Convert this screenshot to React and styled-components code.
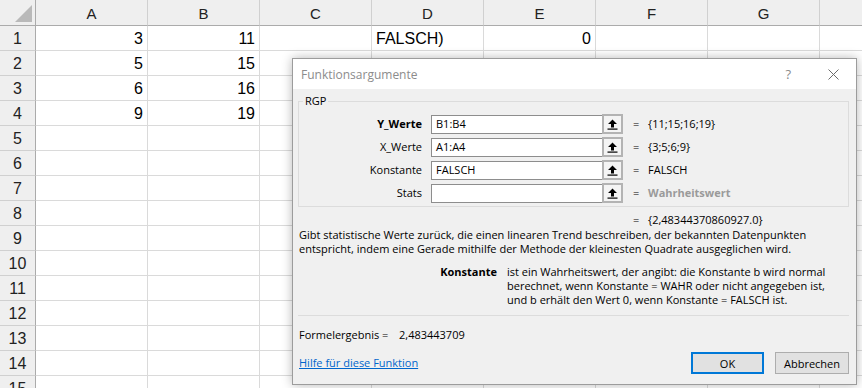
import styled, { createGlobalStyle } from "styled-components";

const GlobalStyle = createGlobalStyle`
  html, body {
    margin: 0;
    padding: 0;
    background: #ffffff;
  }
`;

const columns = ["A", "B", "C", "D", "E", "F", "G", ""];

// values per row, text cells align left and numbers align right (like excel)
const data = [
  ["3", "11", "", "FALSCH)", "0"],
  ["5", "15"],
  ["6", "16"],
  ["9", "19"],
];

const args = [
  { name: "Y_Werte", value: "B1:B4", result: "{11;15;16;19}", required: true },
  { name: "X_Werte", value: "A1:A4", result: "{3;5;6;9}" },
  { name: "Konstante", value: "FALSCH", result: "FALSCH" },
  { name: "Stats", value: "", result: "Wahrheitswert", hint: true },
];

const isNumber = (v) => /^-?\d+([.,]\d+)?$/.test(v);

const ArrowUpIcon = () => (
  <svg width="11" height="11" viewBox="0 0 11 11">
    <path d="M5.5 0.5 L10 5 L7 5 L7 8.5 L4 8.5 L4 5 L1 5 Z" fill="#000" />
    <rect x="0.5" y="9.5" width="10" height="1.2" fill="#000" />
  </svg>
);

const CloseIcon = () => (
  <svg width="11" height="11" viewBox="0 0 11 11">
    <path d="M0.5 0.5 L10.5 10.5 M10.5 0.5 L0.5 10.5" stroke="#6b6b6b" strokeWidth="1" />
  </svg>
);

export default function App() {
  const rows = Array.from({ length: 15 }, (_, i) => data[i] || []);

  return (
    <>
      <GlobalStyle />
      <Screen>
        <Sheet>
          <Corner>
            <CornerMark />
          </Corner>
          {columns.map((c, i) => (
            <ColHeader key={"h" + i}>{c}</ColHeader>
          ))}
          {rows.map((row, r) => (
            <Row key={r}>
              <RowHeader>{r + 1}</RowHeader>
              {columns.map((_, c) => {
                const v = row[c] || "";
                return (
                  <Cell key={c} $align={isNumber(v) ? "flex-end" : "flex-start"}>
                    {v}
                  </Cell>
                );
              })}
            </Row>
          ))}
        </Sheet>

        <Dialog>
          <TitleBar>
            <Title>Funktionsargumente</Title>
            <TitleControls>
              <HelpMark>?</HelpMark>
              <CloseIcon />
            </TitleControls>
          </TitleBar>
          <Body>
            <Group>
              <Legend>RGP</Legend>
              <ArgList>
                {args.map((a) => (
                  <ArgRow key={a.name}>
                    <ArgLabel $required={a.required}>{a.name}</ArgLabel>
                    <ArgInput>{a.value}</ArgInput>
                    <RefButton>
                      <ArrowUpIcon />
                    </RefButton>
                    <Eq>=</Eq>
                    <ArgResult $hint={a.hint}>{a.result}</ArgResult>
                  </ArgRow>
                ))}
              </ArgList>
            </Group>

            <ResultLine>
              <Eq>=</Eq>
              <span>{"{2,48344370860927.0}"}</span>
            </ResultLine>

            <Description>
              Gibt statistische Werte zurück, die einen linearen Trend beschreiben, der bekannten Datenpunkten
              <br />
              entspricht, indem eine Gerade mithilfe der Methode der kleinesten Quadrate ausgeglichen wird.
            </Description>

            <ArgHelp>
              <ArgHelpName>Konstante</ArgHelpName>
              <ArgHelpText>
                ist ein Wahrheitswert, der angibt: die Konstante b wird normal
                <br />
                berechnet, wenn Konstante = WAHR oder nicht angegeben ist,
                <br />
                und b erhält den Wert 0, wenn Konstante = FALSCH ist.
              </ArgHelpText>
            </ArgHelp>

            <Divider />

            <FormulaResult>
              <FormulaLabel>Formelergebnis =</FormulaLabel>
              <span>2,483443709</span>
            </FormulaResult>

            <Footer>
              <HelpLink href="#">Hilfe für diese Funktion</HelpLink>
              <Buttons>
                <DialogButton $primary>OK</DialogButton>
                <DialogButton>Abbrechen</DialogButton>
              </Buttons>
            </Footer>
          </Body>
        </Dialog>
      </Screen>
    </>
  );
}

const Screen = styled.div`
  position: relative;
  width: 862px;
  height: 388px;
  overflow: hidden;
  background: #ffffff;
`;

const Sheet = styled.div`
  display: grid;
  grid-template-columns: 36px repeat(8, 112px);
  grid-template-rows: 26px;
  grid-auto-rows: 25px;
  font-family: "Liberation Sans", Arial, sans-serif;
  color: #000;
`;

const Row = styled.div`
  display: contents;
`;

const HeaderBase = styled.div`
  box-sizing: border-box;
  background: #efefef;
  display: flex;
  align-items: center;
  justify-content: center;
  color: #222;
  font-size: 16px;
`;

const Corner = styled(HeaderBase)`
  position: relative;
  border-right: 1px solid #ababab;
  border-bottom: 1px solid #ababab;
`;

const CornerMark = styled.div`
  position: absolute;
  right: 3px;
  bottom: 3px;
  width: 17px;
  height: 17px;
  background: #b9b9b9;
  clip-path: polygon(100% 0, 100% 100%, 0 100%);
`;

const ColHeader = styled(HeaderBase)`
  border-right: 1px solid #d0d0d0;
  border-bottom: 1px solid #ababab;
  padding-top: 2px;
  font-size: 15px;
`;

const RowHeader = styled(HeaderBase)`
  border-right: 1px solid #ababab;
  border-bottom: 1px solid #d0d0d0;
  padding-top: 2px;
`;

const Cell = styled.div`
  box-sizing: border-box;
  border-right: 1px solid #dadada;
  border-bottom: 1px solid #dadada;
  padding: 2px 4px 0;
  display: flex;
  align-items: center;
  justify-content: ${(p) => p.$align};
  font-size: 16px;
  white-space: nowrap;
`;

const Dialog = styled.div`
  position: absolute;
  left: 292px;
  top: 58px;
  width: 565px;
  height: 327px;
  box-sizing: border-box;
  border: 1px solid #9c9c9c;
  background: #f0f0f0;
  box-shadow: 0 0 10px rgba(0, 0, 0, 0.28);
  display: flex;
  flex-direction: column;
  font-family: "Open Sans", "Noto Sans", sans-serif;
  font-size: 11px;
  color: #000;
`;

const TitleBar = styled.div`
  height: 30px;
  flex: none;
  background: #ffffff;
  display: flex;
  align-items: center;
  justify-content: space-between;
  padding: 0 17px 0 8px;
`;

const Title = styled.div`
  font-size: 12px;
  color: #8c8c8c;
`;

const TitleControls = styled.div`
  display: flex;
  align-items: center;
  gap: 37px;
`;

const HelpMark = styled.span`
  font-size: 13px;
  color: #8c8c8c;
`;

const Body = styled.div`
  flex: 1;
  display: flex;
  flex-direction: column;
  padding: 0 7px 0 5px;
  line-height: 14px;
`;

const Group = styled.fieldset`
  margin: 5px 0 0;
  padding: 6px 0 3px;
  border: 1px solid #dcdcdc;
  min-width: 0;
`;

const Legend = styled.legend`
  margin-left: 4px;
  padding: 0 2px;
  font-size: 11px;
  line-height: 14px;
`;

const ArgList = styled.div`
  display: grid;
  row-gap: 3px;
`;

const ArgRow = styled.div`
  display: flex;
  align-items: center;
  height: 20px;
`;

const ArgLabel = styled.div`
  width: 123px;
  margin-right: 9px;
  text-align: right;
  font-weight: ${(p) => (p.$required ? 700 : 400)};
`;

const ArgInput = styled.div`
  box-sizing: border-box;
  width: 171px;
  height: 19px;
  background: #ffffff;
  border: 1px solid #8d8d8d;
  border-right: none;
  padding: 0 4px;
  display: flex;
  align-items: center;
`;

const RefButton = styled.div`
  box-sizing: border-box;
  width: 21px;
  height: 20px;
  background: #f4f4f4;
  border: 2px solid #b3b3b3;
  display: flex;
  align-items: center;
  justify-content: center;
`;

const Eq = styled.span`
  display: inline-block;
  width: 15px;
  margin-left: 10px;
`;

const ArgResult = styled.span`
  color: ${(p) => (p.$hint ? "#9a9a9a" : "#000")};
  font-weight: ${(p) => (p.$hint ? 700 : 400)};
`;

const ResultLine = styled.div`
  margin-top: 6px;
  padding-left: 325px;
`;

const Description = styled.div`
  margin-top: 1px;
  padding-left: 1px;
  white-space: nowrap;
`;

const ArgHelp = styled.div`
  display: flex;
  margin-top: 9px;
`;

const ArgHelpName = styled.div`
  width: 199px;
  text-align: right;
  font-weight: 700;
`;

const ArgHelpText = styled.div`
  margin-left: 10px;
  white-space: nowrap;
`;

const Divider = styled.div`
  height: 1px;
  margin-top: 8px;
  background: #dcdcdc;
`;

const FormulaResult = styled.div`
  margin-top: 12px;
  padding-left: 1px;
  display: flex;
`;

const FormulaLabel = styled.span`
  width: 100px;
`;

const Footer = styled.div`
  margin-top: 10px;
  display: flex;
  align-items: center;
  justify-content: space-between;
`;

const HelpLink = styled.a`
  padding-left: 1px;
  color: #0066cc;
  text-decoration: underline;
`;

const Buttons = styled.div`
  display: flex;
  gap: 11px;
`;

const DialogButton = styled.button`
  box-sizing: border-box;
  width: ${(p) => (p.$primary ? "73px" : "74px")};
  height: 22px;
  padding: 0;
  background: #e1e1e1;
  border: ${(p) => (p.$primary ? "2px solid #0078d7" : "1px solid #adadad")};
  font-family: inherit;
  font-size: 11px;
  color: #000;
`;
